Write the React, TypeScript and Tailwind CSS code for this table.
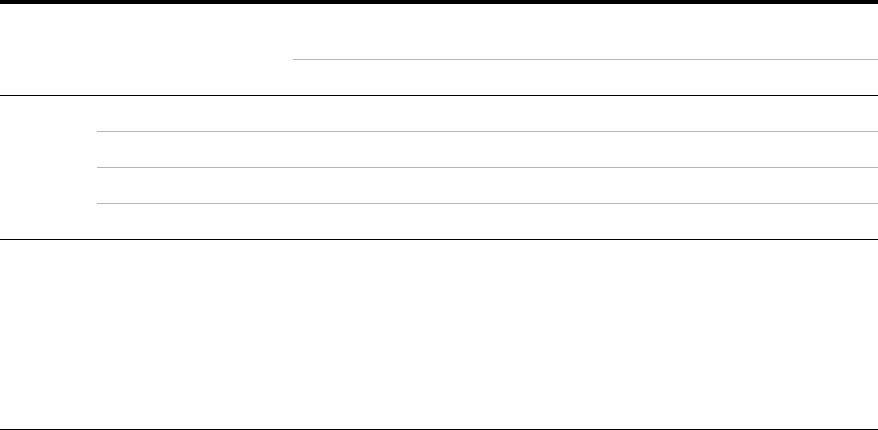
export default function App() {
  const bodyRows = [0, 1, 2, 3];

  return (
    <div className="w-[878px] h-[430px] bg-white font-['Liberation_Sans',sans-serif]">
      {/* top rule */}
      <div className="h-[4px] bg-black" />

      {/* header */}
      <div className="flex border-b border-black">
        <div className="w-[293px] shrink-0" />
        <div className="flex-1 flex flex-col">
          <div className="h-[56px] border-b border-[#b4b4b4]" />
          <div className="h-[35px]" />
        </div>
      </div>

      {/* body group */}
      <div className="flex border-b border-black">
        <div className="w-[97px] shrink-0" />
        <div className="flex-1 flex flex-col">
          {bodyRows.map((r) => (
            <div
              key={r}
              className={r < bodyRows.length - 1 ? 'h-[36px] border-b border-[#b4b4b4]' : 'h-[35px]'}
            />
          ))}
        </div>
      </div>

      {/* empty footer group */}
      <div className="h-[190px] border-b border-black" />
    </div>
  );
}
